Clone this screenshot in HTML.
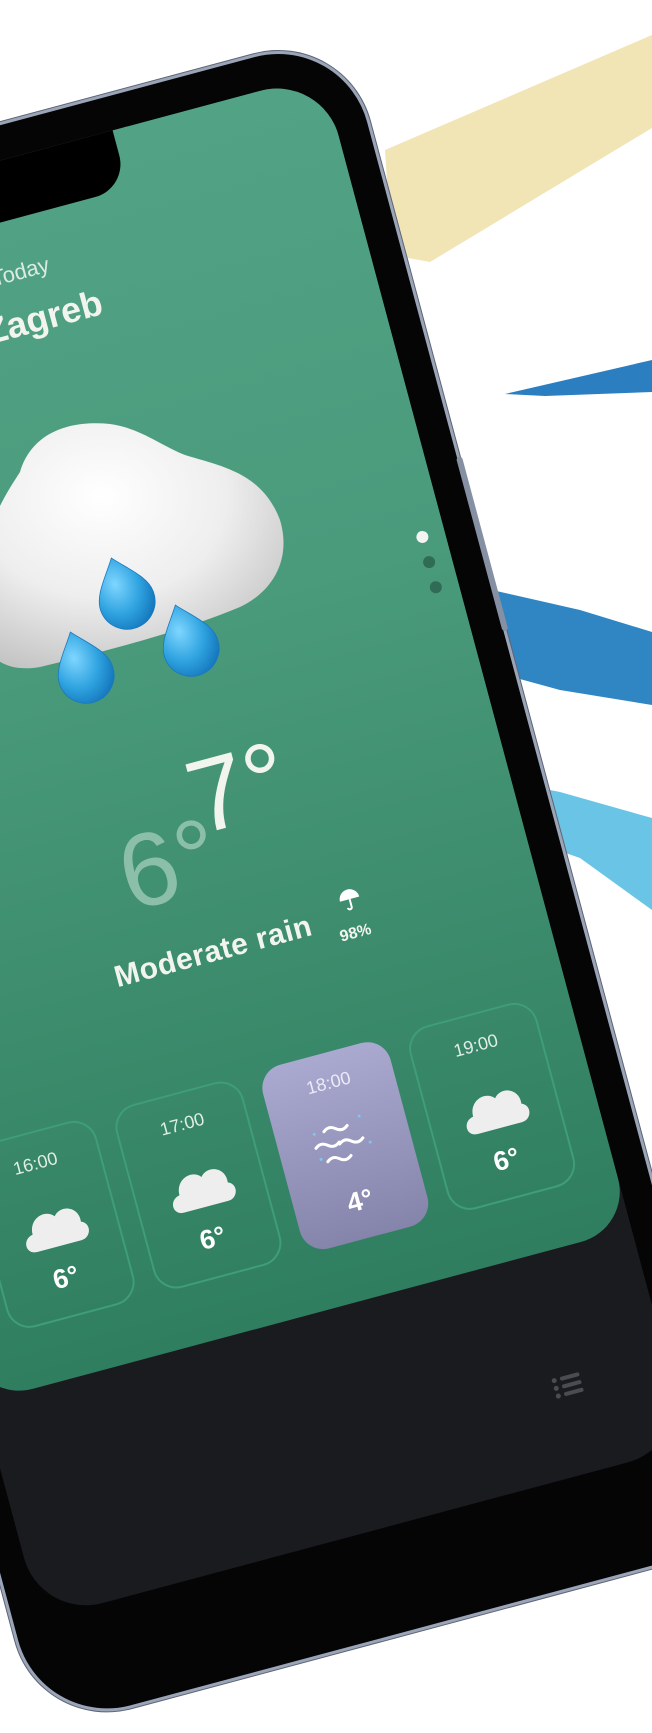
<!DOCTYPE html>
<html><head><meta charset="utf-8"><style>
html,body{margin:0;padding:0;width:652px;height:1412px;overflow:hidden;background:#fff;font-family:"Liberation Sans",sans-serif}
.bg{position:absolute;left:0;top:0}
.L{position:absolute;left:0;top:0;width:0;height:0;transform-origin:0 0;transform:rotate(-15deg)}
.frame{position:absolute;left:-410px;top:118px;width:730px;height:1560px;border-radius:95px;background:#050506;border:3px solid #9ba5b8;box-shadow:0 0 0 1px #5d6474}
.btn{position:absolute;left:322px;top:560px;width:6px;height:180px;border-radius:3px;background:#8690a3}
.screen{position:absolute;left:-380px;top:155px;width:672px;height:1420px;border-radius:64px;background:#1a1b1f;overflow:hidden}
.green{position:absolute;left:0;top:0;width:672px;height:1195px;border-radius:0 0 52px 52px;background:linear-gradient(180deg,#52a286 0%,#4a9a7c 40%,#3a8a6b 75%,#2f7e60 100%)}
.notch{position:absolute;left:0;top:0;width:455px;height:60px;background:#000;border-radius:0 0 34px 0}
.t{position:absolute;color:#f2f4ee;white-space:nowrap}
.card{position:absolute;top:946px;width:132px;height:190px;border-radius:24px;border:2px solid #3f9d78;box-sizing:border-box}
.card .tm{position:absolute;top:20px;width:100%;text-align:center;font-size:18px;color:#dfeee7}
.card .tp{position:absolute;bottom:22px;width:100%;text-align:center;font-size:27px;font-weight:bold;color:#fff}
.card svg{position:absolute;left:31px;top:70px}
.dot{position:absolute;left:643px;width:12px;height:12px;border-radius:50%;background:#2f6b55}
</style></head><body>
<svg class="bg" width="652" height="1412">
<polygon points="385,150 652,35 652,128 430,262 392,255" fill="#f1e4b5"/>
<polygon points="505,394 652,360 652,392 545,396" fill="#2b7ec0"/>
<polygon points="470,585 580,610 652,632 652,705 560,690 480,668" fill="#2f86c2"/>
<polygon points="500,780 560,792 652,818 652,910 580,858 500,830" fill="#69c4e6"/>
</svg>
<div class="L">
 <div class="frame"></div>
 <div class="btn"></div>
 <div class="screen">
  <div class="green"></div>
  <div class="notch"></div>
  <div class="t" style="left:300px;top:100px;font-size:22px;color:#dcebe4">Today</div>
  <div class="t" style="left:280px;top:142px;font-size:36px;font-weight:bold">Zagreb</div>
  <div class="dot" style="top:467px;background:#f2f5f2"></div>
  <div class="dot" style="top:493px"></div>
  <div class="dot" style="top:519px"></div>
  <div class="t" style="left:270px;top:672px;font-size:104px;line-height:104px;color:#8cbfa9">6°</div>
  <div class="t" style="left:356px;top:616px;font-size:104px;line-height:104px">7°</div>
  <div class="t" style="left:238px;top:803px;font-size:30px;font-weight:bold;letter-spacing:.5px">Moderate rain</div>
  <svg style="position:absolute;left:473px;top:793px" width="24" height="24" viewBox="0 0 24 24"><path d="M2,11 A10,10 0 0 1 22,11 Z" fill="#fff"/><path d="M12,11 V19 A2,2 0 0 1 8,19" stroke="#fff" stroke-width="2" fill="none"/></svg>
  <div class="t" style="left:466px;top:830px;font-size:16px;font-weight:bold">98%</div>
  <div class="card" style="left:47px"><div class="tm">16:00</div><svg width="70" height="50" viewBox="0 0 70 50"><path d="M12,46 C0,46 0,30 12,28 C12,12 30,6 38,16 C46,6 64,12 62,28 C72,32 68,46 58,46Z" fill="#eeeeee"/></svg><div class="tp">6°</div></div>
  <div class="card" style="left:199px"><div class="tm">17:00</div><svg width="70" height="50" viewBox="0 0 70 50"><path d="M12,46 C0,46 0,30 12,28 C12,12 30,6 38,16 C46,6 64,12 62,28 C72,32 68,46 58,46Z" fill="#eeeeee"/></svg><div class="tp">6°</div></div>
  <div class="card" style="left:351px;border:none;background:linear-gradient(180deg,#aaa9d0,#8584ab)"><div class="tm" style="color:#eceaf7">18:00</div>
   <svg width="70" height="60" viewBox="0 0 70 60" style="top:62px"><g stroke="#fff" stroke-width="3" fill="none" stroke-linecap="round"><path d="M18,14 q6,-5 12,0 t12,0"/><path d="M6,28 q6,-5 12,0 t12,0"/><path d="M30,30 q6,-5 12,0 t12,0"/><path d="M14,44 q6,-5 12,0 t12,0"/></g><g fill="#7cc6f0"><circle cx="8" cy="14" r="1.5"/><circle cx="56" cy="8" r="1.5"/><circle cx="60" cy="36" r="1.5"/><circle cx="8" cy="40" r="1.5"/></g></svg>
   <div class="tp">4°</div></div>
  <div class="card" style="left:503px"><div class="tm">19:00</div><svg width="70" height="50" viewBox="0 0 70 50"><path d="M12,46 C0,46 0,30 12,28 C12,12 30,6 38,16 C46,6 64,12 62,28 C72,32 68,46 58,46Z" fill="#eeeeee"/></svg><div class="tp">6°</div></div>
  <svg style="position:absolute;left:555px;top:1318px" width="30" height="24" viewBox="0 0 30 24"><g fill="#4a4c52"><circle cx="3" cy="4" r="2.5"/><circle cx="3" cy="12" r="2.5"/><circle cx="3" cy="20" r="2.5"/><rect x="9" y="2" width="20" height="4" rx="2"/><rect x="9" y="10" width="20" height="4" rx="2"/><rect x="9" y="18" width="20" height="4" rx="2"/></g></svg>
 </div>
</div>
<svg style="position:absolute;left:0;top:0" width="652" height="1412">
 <defs>
  <radialGradient id="cg" cx="40%" cy="30%" r="75%"><stop offset="0" stop-color="#ffffff"/><stop offset=".55" stop-color="#eeeeee"/><stop offset="1" stop-color="#c4c4c4"/></radialGradient>
  <radialGradient id="dg" cx="40%" cy="35%" r="70%"><stop offset="0" stop-color="#7fd6ff"/><stop offset=".6" stop-color="#2fa3e0"/><stop offset="1" stop-color="#1577bd"/></radialGradient>
 </defs>
 <path d="M-20,560 C-10,520 5,495 20,472 C32,432 70,420 110,424 C140,428 160,445 185,455 C220,466 262,472 280,520 C292,560 272,592 240,607 C180,632 110,650 40,667 C0,674 -20,652 -20,620 Z" fill="url(#cg)"/>
 <g fill="url(#dg)" stroke="#1a78bf" stroke-width=".8">
  <path transform="translate(123,590) rotate(-20)" d="M0,-34 C12,-18 28,-4 28,12 A28,28 0 1 1 -28,12 C-28,-4 -12,-18 0,-34Z"/>
  <path transform="translate(187,637) rotate(-20)" d="M0,-34 C12,-18 28,-4 28,12 A28,28 0 1 1 -28,12 C-28,-4 -12,-18 0,-34Z"/>
  <path transform="translate(82,664) rotate(-20)" d="M0,-34 C12,-18 28,-4 28,12 A28,28 0 1 1 -28,12 C-28,-4 -12,-18 0,-34Z"/>
 </g>
</svg>
</body></html>
